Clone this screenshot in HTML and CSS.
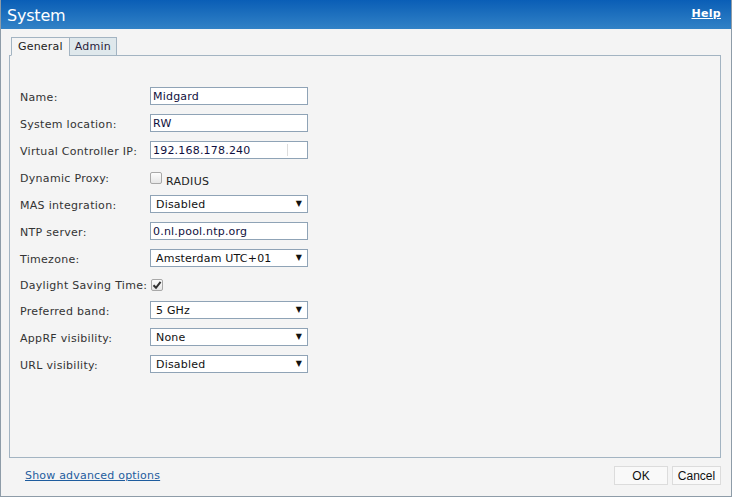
FILE: index.html
```html
<!DOCTYPE html>
<html>
<head>
<meta charset="utf-8">
<link rel="stylesheet" href="styles.css">
</head>
<body>
<div class="window">
  <div class="titlebar">
    <span class="title">System</span>
    <a class="help">Help</a>
  </div>
  <div class="content">
    <div class="tabs">
      <div class="tab active">General</div>
      <div class="tab">Admin</div>
    </div>
    <div class="panel">
      <div class="form">
        <div class="row"><label>Name:</label><div class="input">Midgard</div></div>
        <div class="row"><label>System location:</label><div class="input">RW</div></div>
        <div class="row"><label>Virtual Controller IP:</label><div class="input">192.168.178.240<span class="caret"></span></div></div>
        <div class="row"><label>Dynamic Proxy:</label><div class="check-wrap"><span class="checkbox"></span><span class="check-label">RADIUS</span></div></div>
        <div class="row"><label>MAS integration:</label><div class="select"><span>Disabled</span><span class="arrow">▼</span></div></div>
        <div class="row"><label>NTP server:</label><div class="input">0.nl.pool.ntp.org</div></div>
        <div class="row"><label>Timezone:</label><div class="select"><span>Amsterdam UTC+01</span><span class="arrow">▼</span></div></div>
        <div class="row short"><label>Daylight Saving Time:</label><span class="checkbox checked"><svg viewBox="0 0 12 12" width="12" height="12"><path d="M2.5 6.2 L5 8.8 L9.6 2.8" fill="none" stroke="#333" stroke-width="2"/></svg></span></div>
        <div class="row"><label>Preferred band:</label><div class="select"><span>5 GHz</span><span class="arrow">▼</span></div></div>
        <div class="row"><label>AppRF visibility:</label><div class="select"><span>None</span><span class="arrow">▼</span></div></div>
        <div class="row"><label>URL visibility:</label><div class="select"><span>Disabled</span><span class="arrow">▼</span></div></div>
      </div>
    </div>
    <div class="footer">
      <a class="adv">Show advanced options</a>
      <div class="buttons">
        <button class="btn ok">OK</button>
        <button class="btn cancel">Cancel</button>
      </div>
    </div>
  </div>
</div>
</body>
</html>
```
FILE: styles.css
```css
* { box-sizing: border-box; }
html, body { margin: 0; padding: 0; }
body {
  width: 732px;
  height: 497px;
  overflow: hidden;
  font-family: "DejaVu Sans", Verdana, sans-serif;
  font-size: 11px;
  color: #333;
}
.window {
  width: 732px;
  height: 497px;
  border: 1px solid #8e9ca8;
  border-top: none;
  background: #f4f4f4;
  display: flex;
  flex-direction: column;
}
.titlebar {
  height: 29px;
  background: linear-gradient(#0a5eb6, #3282c6);
  display: flex;
  align-items: center;
  justify-content: space-between;
  padding: 0 10px 0 6px;
  flex: none;
}
.title {
  color: #fff;
  font-family: "DejaVu Sans", Verdana, sans-serif;
  font-size: 16px;
  letter-spacing: -0.2px;
  position: relative;
  top: 1px;
}
.help {
  color: #fff;
  font-weight: bold;
  font-size: 11px;
  letter-spacing: 0.3px;
  text-decoration: underline;
  position: relative;
  top: -1px;
}
.content {
  flex: 1;
  display: flex;
  flex-direction: column;
  padding: 8px 10px 0 8px;
}
.tabs {
  display: flex;
  height: 19px;
  position: relative;
  z-index: 1;
}
.tab {
  height: 19px;
  border: 1px solid #a3b4c2;
  padding: 0 5px;
  line-height: 17px;
  font-size: 11px;
  letter-spacing: 0.2px;
  color: #2a1e3a;
  background: #dfe8ec;
  margin-left: -1px;
}
.tab.active {
  background: #f4f4f4;
  border-bottom-color: #f4f4f4;
  margin-left: 2px;
  padding: 0 6px;
  color: #222;
}
.panel {
  height: 403px;
  margin-top: -1px;
  border: 1px solid #a3b4c2;
  padding: 31px 0 0 10px;
}
.form {
  display: flex;
  flex-direction: column;
  gap: 9px;
}
.row {
  display: flex;
  align-items: center;
  height: 18px;
}
.row.short { height: 16px; }
.row label {
  width: 130px;
  color: #333;
  letter-spacing: 0.3px;
  position: relative;
  top: 1px;
}
.input, .select {
  width: 158px;
  height: 18px;
  border: 1px solid #8fa3b6;
  background: #fff;
  color: #101040;
  line-height: 16px;
  padding-top: 1px;
  position: relative;
  letter-spacing: 0.2px;
}
.input { padding-left: 2px; }
.select {
  display: flex;
  justify-content: space-between;
  padding: 1px 5px 0 5px;
  color: #111;
}
.arrow {
  font-size: 8px;
  color: #111;
  position: relative;
  top: -1px;
}
.caret {
  position: absolute;
  left: 136px;
  top: 2px;
  width: 1px;
  height: 12px;
  background: #ddd;
}
.check-wrap {
  display: flex;
  align-items: flex-start;
  height: 18px;
}
.check-wrap .checkbox { margin-top: 4px; }
.checkbox {
  display: inline-block;
  width: 12px;
  height: 12px;
  border: 1px solid #a8a8a8;
  border-radius: 2px;
  background: linear-gradient(#fdfdfd, #e6e6e6);
  position: relative;
}
.checkbox svg {
  position: absolute;
  left: -1px;
  top: -1px;
}
.checkbox.checked { margin-left: 1px; margin-top: 1px; }
.check-label {
  margin-left: 4px;
  margin-top: 7px;
  color: #222;
  letter-spacing: 0.3px;
}
.footer {
  flex: 1;
  display: flex;
  align-items: center;
  justify-content: space-between;
  padding: 0 0 3px 16px;
}
.adv {
  color: #1e5c9e;
  text-decoration: underline;
  font-size: 11px;
  letter-spacing: 0.2px;
}
.buttons {
  display: flex;
  gap: 4px;
}
.btn {
  font-family: "Liberation Sans", Arial, sans-serif;
  font-size: 12px;
  color: #111;
  height: 19px;
  background: #f9f9f9;
  border: 1px solid #dcdcdc;
  border-radius: 0;
  padding: 0;
}
.ok { width: 54px; }
.cancel { width: 49px; }
```
